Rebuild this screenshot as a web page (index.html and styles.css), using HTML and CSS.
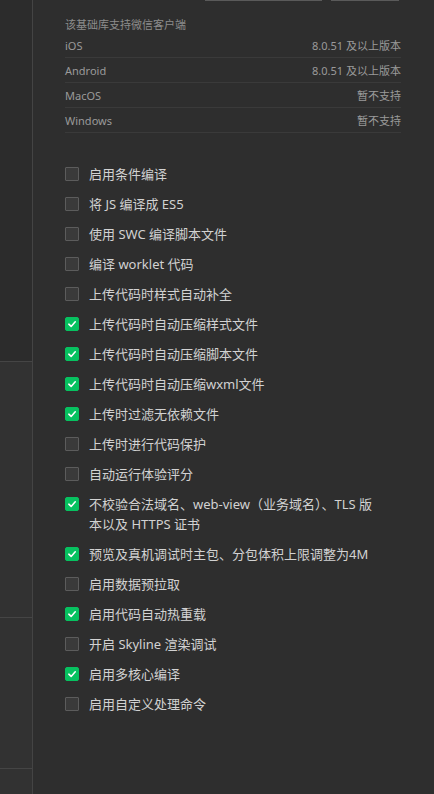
FILE: index.html
```html
<!DOCTYPE html>
<html lang="zh">
<head>
<meta charset="utf-8">
<link rel="stylesheet" href="styles.css">
</head>
<body>
<div class="app">
  <aside class="side">
    <div class="side-sec s1"></div>
    <div class="side-sec s2"></div>
    <div class="side-sec s3"></div>
    <div class="side-sec s4"></div>
  </aside>
  <main class="main">
    <div class="topbar">
      <span class="field f1"></span>
      <span class="field f2"></span>
    </div>
    <div class="support">
      <div class="support-title">该基础库支持微信客户端</div>
      <div class="row"><span>iOS</span><span>8.0.51 及以上版本</span></div>
      <div class="row"><span>Android</span><span>8.0.51 及以上版本</span></div>
      <div class="row"><span>MacOS</span><span>暂不支持</span></div>
      <div class="row"><span>Windows</span><span>暂不支持</span></div>
    </div>
    <ul class="opts">
      <li class="opt"><span class="cb"></span><span class="lbl">启用条件编译</span></li>
      <li class="opt"><span class="cb"></span><span class="lbl">将 JS 编译成 ES5</span></li>
      <li class="opt"><span class="cb"></span><span class="lbl">使用 SWC 编译脚本文件</span></li>
      <li class="opt"><span class="cb"></span><span class="lbl">编译 worklet 代码</span></li>
      <li class="opt"><span class="cb"></span><span class="lbl">上传代码时样式自动补全</span></li>
      <li class="opt"><span class="cb on"><svg viewBox="0 0 14 14"><path d="M3.3 7.2 L6 9.8 L10.8 4.4"/></svg></span><span class="lbl">上传代码时自动压缩样式文件</span></li>
      <li class="opt"><span class="cb on"><svg viewBox="0 0 14 14"><path d="M3.3 7.2 L6 9.8 L10.8 4.4"/></svg></span><span class="lbl">上传代码时自动压缩脚本文件</span></li>
      <li class="opt"><span class="cb on"><svg viewBox="0 0 14 14"><path d="M3.3 7.2 L6 9.8 L10.8 4.4"/></svg></span><span class="lbl">上传代码时自动压缩wxml文件</span></li>
      <li class="opt"><span class="cb on"><svg viewBox="0 0 14 14"><path d="M3.3 7.2 L6 9.8 L10.8 4.4"/></svg></span><span class="lbl">上传时过滤无依赖文件</span></li>
      <li class="opt"><span class="cb"></span><span class="lbl">上传时进行代码保护</span></li>
      <li class="opt"><span class="cb"></span><span class="lbl">自动运行体验评分</span></li>
      <li class="opt"><span class="cb on"><svg viewBox="0 0 14 14"><path d="M3.3 7.2 L6 9.8 L10.8 4.4"/></svg></span><span class="lbl">不校验合法域名、web-view（业务域名）、TLS 版本以及 HTTPS 证书</span></li>
      <li class="opt"><span class="cb on"><svg viewBox="0 0 14 14"><path d="M3.3 7.2 L6 9.8 L10.8 4.4"/></svg></span><span class="lbl">预览及真机调试时主包、分包体积上限调整为4M</span></li>
      <li class="opt"><span class="cb"></span><span class="lbl">启用数据预拉取</span></li>
      <li class="opt"><span class="cb on"><svg viewBox="0 0 14 14"><path d="M3.3 7.2 L6 9.8 L10.8 4.4"/></svg></span><span class="lbl">启用代码自动热重载</span></li>
      <li class="opt"><span class="cb"></span><span class="lbl">开启 Skyline 渲染调试</span></li>
      <li class="opt"><span class="cb on"><svg viewBox="0 0 14 14"><path d="M3.3 7.2 L6 9.8 L10.8 4.4"/></svg></span><span class="lbl">启用多核心编译</span></li>
      <li class="opt"><span class="cb"></span><span class="lbl">启用自定义处理命令</span></li>
    </ul>
  </main>
</div>
</body>
</html>
```
FILE: styles.css
```css
* { box-sizing: border-box; }
html, body { margin: 0; padding: 0; }
body {
  background: #2e2e2e;
  font-family: "Noto Sans", "Noto Sans CJK SC", sans-serif;
  color: #cfcfcf;
  width: 434px;
  height: 794px;
  overflow: hidden;
}
.app {
  display: flex;
  height: 794px;
}
.side {
  width: 33px;
  flex: none;
  border-right: 1px solid #444444;
  display: flex;
  flex-direction: column;
}
.side-sec { border-bottom: 1px solid #454545; }
.s1 { height: 362px; background: #2c2c2c; }
.s2 { height: 256px; background: #323232; }
.s3 { height: 151px; background: #323232; }
.s4 { flex: 1; border-bottom: none; background: #323232; }
.main {
  flex: 1;
  padding: 0 33px 0 32px;
}
.topbar {
  display: flex;
  height: 17px;
  padding-left: 140px;
  gap: 9px;
}
.field {
  height: 1px;
  background: #5a5a5a;
}
.f1 { width: 117px; }
.f2 { width: 68px; }
.support {
  font-size: 11px;
  color: #9a9a9a;
}
.support-title {
  line-height: 16px;
  color: #8c8c8c;
}
.row {
  display: flex;
  justify-content: space-between;
  align-items: center;
  height: 25px;
  border-bottom: 1px solid #3a3a3a;
}
.opts {
  list-style: none;
  margin: 26px 0 0 0;
  padding: 0 18px 0 0;
}
.opt {
  display: flex;
  align-items: flex-start;
  padding: 5px 0;
  font-size: 13px;
  line-height: 20px;
}
.cb {
  flex: none;
  width: 14px;
  height: 14px;
  margin-top: 3px;
  margin-right: 10px;
  border: 1px solid #5c5c5c;
  background: #3a3a3a;
  border-radius: 1px;
  display: flex;
}
.cb.on {
  background: #07c160;
  border-color: #07c160;
  border-radius: 2px;
}
.cb svg {
  width: 12px;
  height: 12px;
  fill: none;
  stroke: #ffffff;
  stroke-width: 1.8;
  stroke-linecap: round;
  stroke-linejoin: round;
}
.lbl { color: #d2d2d2; }
```
